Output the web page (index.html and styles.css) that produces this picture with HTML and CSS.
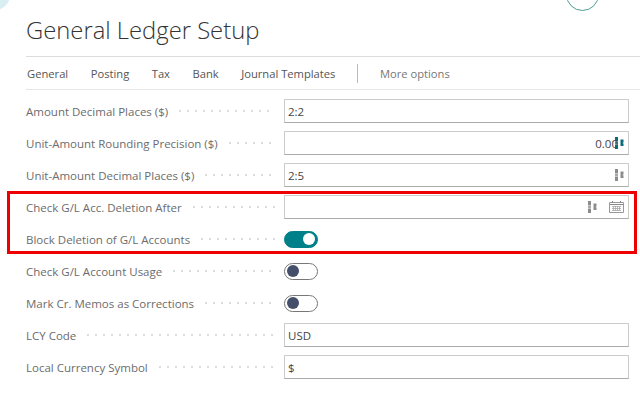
FILE: index.html
```html
<!DOCTYPE html>
<html lang="en">
<head>
  <meta charset="UTF-8">
  <title>General Ledger Setup</title>
  <link rel="stylesheet" href="styles.css">
</head>
<body>
  <div class="corner-circle"></div>
  <div class="top-circle"></div>

  <div class="page">
    <h1>General Ledger Setup</h1>

    <nav class="tabs">
      <span>General</span>
      <span>Posting</span>
      <span>Tax</span>
      <span>Bank</span>
      <span>Journal Templates</span>
      <i class="tab-sep"></i>
      <span class="more">More options</span>
    </nav>

    <div class="form">
      <div class="row">
        <label>Amount Decimal Places ($)</label><i class="dots"></i>
        <div class="field">2:2</div>
      </div>
      <div class="row">
        <label>Unit-Amount Rounding Precision ($)</label><i class="dots"></i>
        <div class="field num">0.00
          <svg class="ai ai-teal" viewBox="0 0 9 12"><use href="#ai"/></svg>
        </div>
      </div>
      <div class="row">
        <label>Unit-Amount Decimal Places ($)</label><i class="dots"></i>
        <div class="field">2:5
          <svg class="ai" viewBox="0 0 9 12"><use href="#ai"/></svg>
        </div>
      </div>
      <div class="row">
        <label>Check G/L Acc. Deletion After</label><i class="dots"></i>
        <div class="field">
          <svg class="ai ai-left" viewBox="0 0 9 12"><use href="#ai"/></svg>
          <svg class="cal" viewBox="0 0 15 12">
            <path d="M.5 1.5h14v10H.5z" fill="none" stroke="#999"/>
            <path d="M1 3.5h13" stroke="#888"/>
            <path d="M3 5.5h9M3 7.5h9M3 9.5h9M4.5 5v5M6.5 5v5M8.5 5v5M10.5 5v5" fill="none" stroke="#aaa" stroke-width=".8"/>
            <path d="M3.5 0v2M11.5 0v2" stroke="#888"/>
          </svg>
        </div>
      </div>
      <div class="row">
        <label>Block Deletion of G/L Accounts</label><i class="dots"></i>
        <div class="toggle on"><b></b></div>
      </div>
      <div class="row">
        <label>Check G/L Account Usage</label><i class="dots"></i>
        <div class="toggle"><b></b></div>
      </div>
      <div class="row">
        <label>Mark Cr. Memos as Corrections</label><i class="dots"></i>
        <div class="toggle"><b></b></div>
      </div>
      <div class="row">
        <label>LCY Code</label><i class="dots"></i>
        <div class="field">USD</div>
      </div>
      <div class="row">
        <label>Local Currency Symbol</label><i class="dots"></i>
        <div class="field">$</div>
      </div>
    </div>
  </div>

  <div class="highlight"></div>

  <svg width="0" height="0" class="defs">
    <symbol id="ai" viewBox="0 0 9 12">
      <path d="M0 0h3v4.5H0zM0 5.2h3v1.6H0zM0 7.5h3V12H0z" fill="currentColor"/>
      <path d="M5.5 2.5h3v3l-1.2.5 1.2.5v2.5h-3z" fill="currentColor"/>
    </symbol>
  </svg>
</body>
</html>
```

FILE: styles.css
```css
html, body {
  margin: 0;
  height: 402px;
  overflow: hidden;
  background: #fff;
}
body {
  font-family: "Open Sans", "Noto Sans", sans-serif;
  color: #505050;
}
.page {
  padding: 14px 0 0 26px;
}
h1 {
  margin: 0;
  height: 42px;
  font-size: 23.8px;
  line-height: 32px;
  font-weight: 300;
  color: #333;
}
.tabs {
  display: flex;
  align-items: center;
  height: 32px;
  padding-left: 1px;
  border-top: 1px solid #ddd;
  border-bottom: 1px solid #e6e6e6;
  font-size: 11.2px;
  color: #555;
}
.tabs span {
  margin-right: 22.5px;
}
.tab-sep {
  width: 1px;
  height: 19px;
  background: #bbb;
  margin: 0 22px 0 -1px;
}
.tabs .more {
  color: #777;
}
.form {
  padding: 9px 11px 0 0;
}
.row {
  display: flex;
  align-items: center;
  height: 24px;
  margin-bottom: 8.05px;
  font-size: 11.5px;
}
.row label {
  color: #6c6c6c;
  padding-right: 8px;
}
.dots {
  flex: 1;
  height: 2px;
  margin-right: 9px;
  background: radial-gradient(circle, #dcdcdc 0.8px, transparent 1px) 0 0 / 8px 2px repeat-x;
}
.field {
  width: 345px;
  height: 24px;
  box-sizing: border-box;
  border: 1px solid #ccc;
  border-bottom-color: #aaa;
  padding: 0 4px 0 3px;
  display: flex;
  align-items: center;
  color: #444;
  font-size: 11.5px;
}
.field .ai {
  margin-left: auto;
}
.field.num {
  justify-content: flex-end;
}
.field.num .ai {
  margin-left: -3px;
}
.ai {
  width: 9px;
  height: 12px;
  color: #8c8c8c;
  flex: none;
}
.ai-teal {
  color: #0b6a78;
}
.cal {
  width: 15px;
  height: 12px;
  margin-left: 12px;
  flex: none;
}
.toggle {
  width: 34px;
  height: 17px;
  box-sizing: border-box;
  border: 1px solid #777;
  border-radius: 9px;
  margin-right: 311px;
  display: flex;
  align-items: center;
  padding: 0 2px;
}
.toggle b {
  width: 12px;
  height: 12px;
  border-radius: 50%;
  background: #44506a;
}
.toggle.on {
  background: #00818a;
  border-color: #00818a;
  justify-content: flex-end;
}
.toggle.on b {
  background: #fff;
}
.highlight {
  position: absolute;
  left: 7px;
  top: 191px;
  width: 624px;
  height: 57px;
  border: 3px solid #ee0000;
}
.corner-circle {
  position: absolute;
  left: -20px;
  top: -20px;
  width: 30px;
  height: 30px;
  border-radius: 50%;
  background: #d8eef2;
}
.top-circle {
  position: absolute;
  left: 566px;
  top: -22px;
  width: 31px;
  height: 31px;
  border-radius: 50%;
  border: 1px solid #4a9d97;
}
.defs {
  position: absolute;
}
```
